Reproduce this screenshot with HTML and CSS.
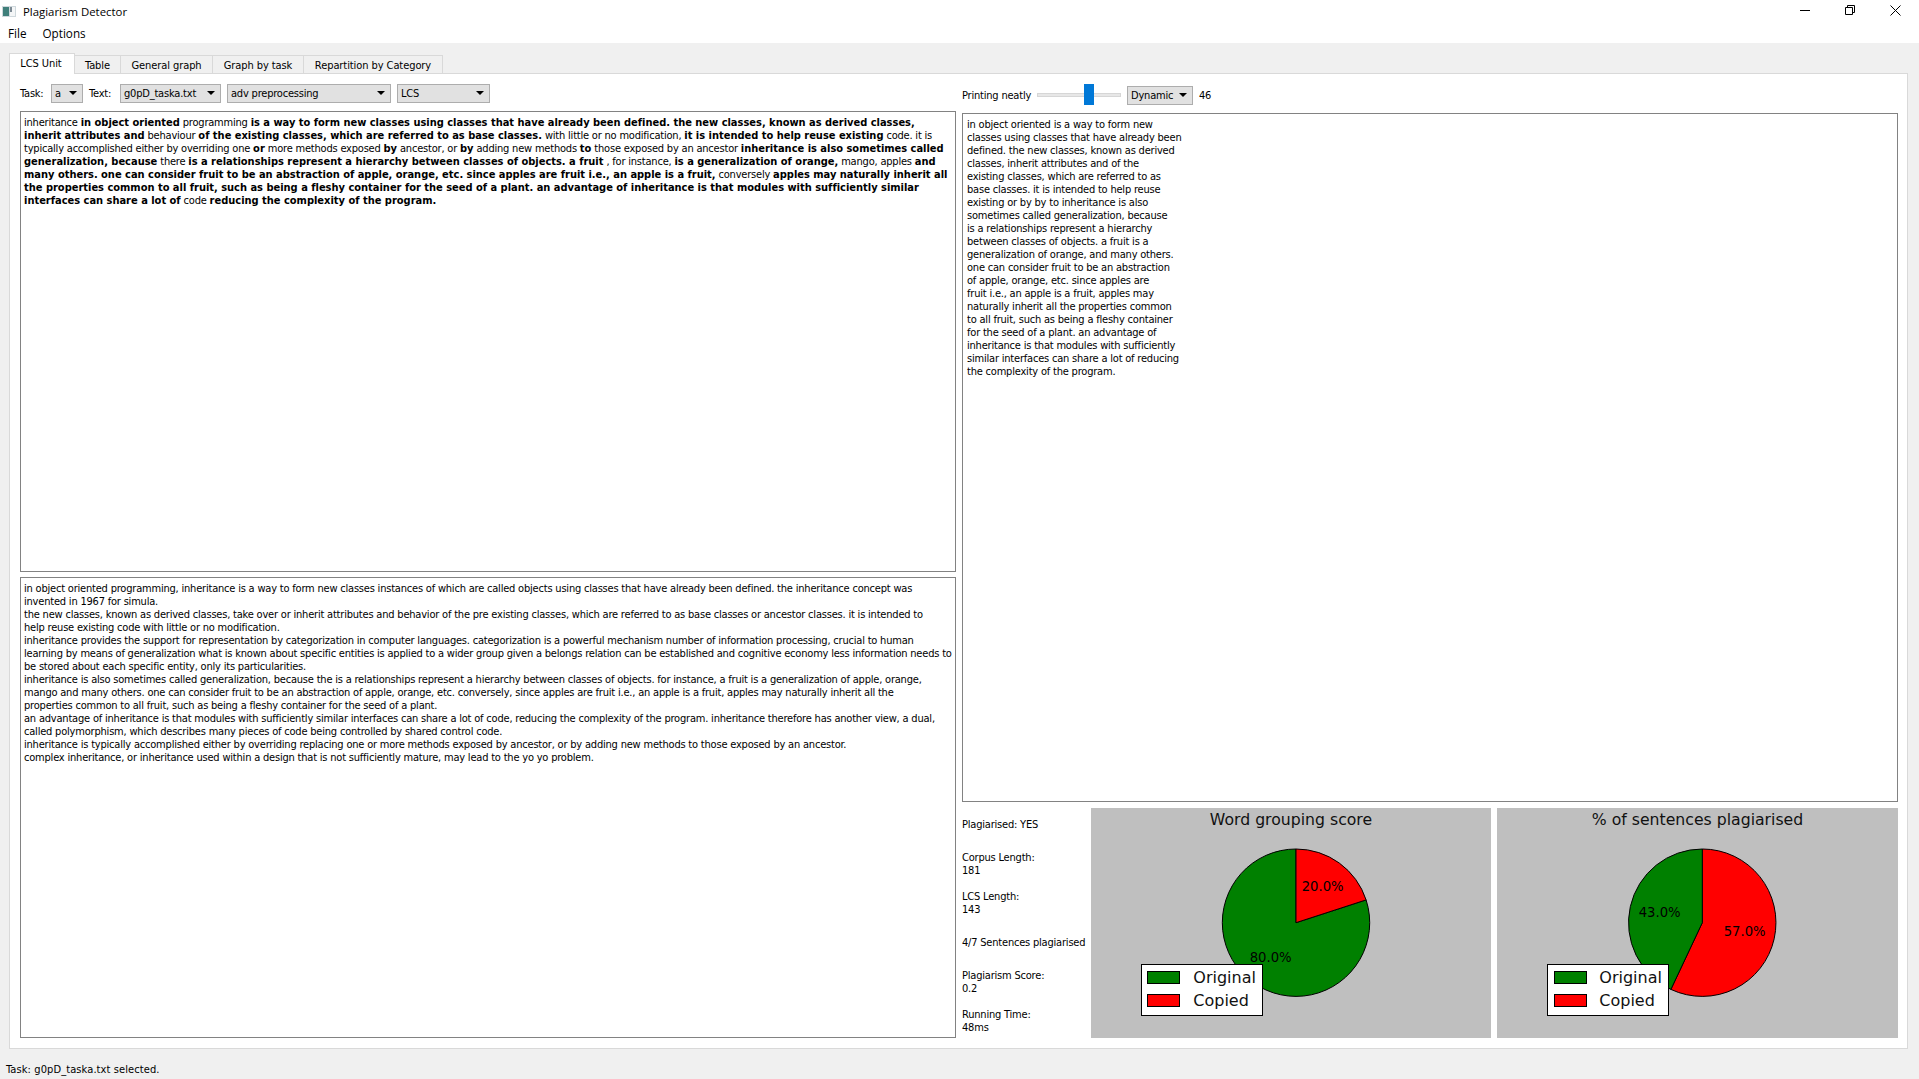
FILE: index.html
```html
<!DOCTYPE html>
<html lang="en">
<head>
  <meta charset="UTF-8" />
  <title>Plagiarism Detector</title>
  <link rel="stylesheet" href="styles.css">
</head>
<body>
  <div class="titlebar">
    <svg class="app-icon" width="14" height="11" viewBox="0 0 14 11">
      <rect x="0" y="0" width="14" height="11" fill="#cfd8dc"/>
      <rect x="1" y="1" width="6" height="9" fill="#3f7f7a"/>
      <rect x="8" y="1" width="5" height="9" fill="#f4f6f7"/>
      <rect x="8" y="1" width="2" height="5" fill="#7d8a94"/>
    </svg>
    <span class="title-text">Plagiarism Detector</span>
    <div class="window-btns">
      <svg width="10" height="10" viewBox="0 0 10 10"><path d="M0 5.5H10" stroke="#000" fill="none"/></svg>
      <svg width="10" height="10" viewBox="0 0 10 10"><path d="M.5 2.5H7.5V9.5H.5ZM2.5 2.5V.5H9.5V7.5H7.5" stroke="#000" fill="none"/></svg>
      <svg width="11" height="11" viewBox="0 0 11 11"><path d="M.5 .5L10.5 10.5M10.5 .5L.5 10.5" stroke="#000" fill="none"/></svg>
    </div>
  </div>
  <div class="menubar">
    <span>File</span>
    <span>Options</span>
  </div>

  <div class="main">
    <div class="tabs">
      <div class="tab active t1">LCS Unit</div>
      <div class="tab t2">Table</div>
      <div class="tab t3">General graph</div>
      <div class="tab t4">Graph by task</div>
      <div class="tab t5">Repartition by Category</div>
    </div>
    <div class="panel">
      <div class="col">
        <div class="toolbar">
          <span class="lbl lbl-task">Task:</span>
          <div class="combo w-task">a<i></i></div>
          <span class="lbl lbl-text">Text:</span>
          <div class="combo w-text">g0pD_taska.txt<i></i></div>
          <div class="combo w-prep">adv preprocessing<i></i></div>
          <div class="combo w-algo">LCS<i></i></div>
        </div>
        <div class="box box-top">
          <div class="t">inheritance <b>in object oriented</b> programming <b>is a way to form new classes using classes that have already been defined. the new classes, known as derived classes,</b></div>
          <div class="t"><b>inherit attributes and</b> behaviour <b>of the existing classes, which are referred to as base classes.</b> with little or no modification, <b>it is intended to help reuse existing</b> code. it is</div>
          <div class="t">typically accomplished either by overriding one <b>or</b> more methods exposed <b>by</b> ancestor, or <b>by</b> adding new methods <b>to</b> those exposed by an ancestor <b>inheritance is also sometimes called</b></div>
          <div class="t"><b>generalization, because</b> there <b>is a relationships represent a hierarchy between classes of objects. a fruit</b> , for instance, <b>is a generalization of orange,</b> mango, apples <b>and</b></div>
          <div class="t"><b>many others. one can consider fruit to be an abstraction of apple, orange, etc. since apples are fruit i.e., an apple is a fruit,</b> conversely <b>apples may naturally inherit all</b></div>
          <div class="t"><b>the properties common to all fruit, such as being a fleshy container for the seed of a plant. an advantage of inheritance is that modules with sufficiently similar</b></div>
          <div class="t"><b>interfaces can share a lot of</b> code <b>reducing the complexity of the program.</b></div>
        </div>
        <div class="box box-bottom">
<span class="t">in object oriented programming, inheritance is a way to form new classes instances of which are called objects using classes that have already been defined. the inheritance concept was
invented in 1967 for simula.
the new classes, known as derived classes, take over or inherit attributes and behavior of the pre existing classes, which are referred to as base classes or ancestor classes. it is intended to
help reuse existing code with little or no modification.
inheritance provides the support for representation by categorization in computer languages. categorization is a powerful mechanism number of information processing, crucial to human
learning by means of generalization what is known about specific entities is applied to a wider group given a belongs relation can be established and cognitive economy less information needs to
be stored about each specific entity, only its particularities.
inheritance is also sometimes called generalization, because the is a relationships represent a hierarchy between classes of objects. for instance, a fruit is a generalization of apple, orange,
mango and many others. one can consider fruit to be an abstraction of apple, orange, etc. conversely, since apples are fruit i.e., an apple is a fruit, apples may naturally inherit all the
properties common to all fruit, such as being a fleshy container for the seed of a plant.
an advantage of inheritance is that modules with sufficiently similar interfaces can share a lot of code, reducing the complexity of the program. inheritance therefore has another view, a dual,
called polymorphism, which describes many pieces of code being controlled by shared control code.
inheritance is typically accomplished either by overriding replacing one or more methods exposed by ancestor, or by adding new methods to those exposed by an ancestor.
complex inheritance, or inheritance used within a design that is not sufficiently mature, may lead to the yo yo problem.</span>
        </div>
      </div>

      <div class="col">
        <div class="toolbar toolbar-right">
          <span class="lbl lbl-print">Printing neatly</span>
          <div class="slider"><div class="handle"></div></div>
          <div class="combo w-dyn">Dynamic<i></i></div>
          <span class="lbl">46</span>
        </div>
        <div class="box box-print">
<span class="t">in object oriented is a way to form new
classes using classes that have already been
defined. the new classes, known as derived
classes, inherit attributes and of the
existing classes, which are referred to as
base classes. it is intended to help reuse
existing or by by to inheritance is also
sometimes called generalization, because
is a relationships represent a hierarchy
between classes of objects. a fruit is a
generalization of orange, and many others.
one can consider fruit to be an abstraction
of apple, orange, etc. since apples are
fruit i.e., an apple is a fruit, apples may
naturally inherit all the properties common
to all fruit, such as being a fleshy container
for the seed of a plant. an advantage of
inheritance is that modules with sufficiently
similar interfaces can share a lot of reducing
the complexity of the program.</span>
        </div>
        <div class="results">
          <div class="stats">
            <div>Plagiarised: YES</div>
            <div>Corpus Length:<br>181</div>
            <div>LCS Length:<br>143</div>
            <div>4/7 Sentences plagiarised</div>
            <div>Plagiarism Score:<br>0.2</div>
            <div>Running Time:<br>48ms</div>
          </div>

          <svg class="chart c1" viewBox="0 0 400 230">
            <text class="chart-title" x="200" y="17">Word grouping score</text>
            <path d="M205 114.7L205 41A73.7 73.7 0 1 0 275.1 91.9Z" fill="#008000" stroke="#000"/>
            <path d="M205 114.7L205 41A73.7 73.7 0 0 1 275.1 91.9Z" fill="#f00" stroke="#000"/>
            <text class="pct" x="231.7" y="83">20.0%</text>
            <text class="pct" x="179.7" y="154">80.0%</text>
            <rect x="50.5" y="156.5" width="121" height="51" fill="#fff" stroke="#000"/>
            <rect x="56.5" y="163.5" width="32" height="12" fill="#008000" stroke="#000"/>
            <rect x="56.5" y="186.5" width="32" height="12" fill="#f00" stroke="#000"/>
            <text class="legend" x="102.3" y="175">Original</text>
            <text class="legend" x="102.3" y="198">Copied</text>
          </svg>

          <svg class="chart c2" viewBox="0 0 401 230">
            <text class="chart-title" x="200.5" y="17">% of sentences plagiarised</text>
            <path d="M205.3 114.7L205.3 41A73.7 73.7 0 1 1 173.9 181.4Z" fill="#f00" stroke="#000"/>
            <path d="M205.3 114.7L205.3 41A73.7 73.7 0 0 0 173.9 181.4Z" fill="#008000" stroke="#000"/>
            <text class="pct" x="162.7" y="109">43.0%</text>
            <text class="pct" x="247.7" y="128">57.0%</text>
            <rect x="50.5" y="156.5" width="121" height="51" fill="#fff" stroke="#000"/>
            <rect x="57.5" y="163.5" width="32" height="12" fill="#008000" stroke="#000"/>
            <rect x="57.5" y="186.5" width="32" height="12" fill="#f00" stroke="#000"/>
            <text class="legend" x="102.3" y="175">Original</text>
            <text class="legend" x="102.3" y="198">Copied</text>
          </svg>
        </div>
      </div>
    </div>
  </div>

  <div class="statusbar">Task: g0pD_taska.txt selected.</div>
</body>
</html>
```

FILE: styles.css
```css
* {
  box-sizing: border-box;
}
html, body {
  margin: 0;
  height: 1079px;
  overflow: hidden;
}
body {
  font-family: "DejaVu Sans Condensed", "DejaVu Sans", Arial, sans-serif;
  font-stretch: condensed;
  font-size: 11px;
  letter-spacing: -0.2px;
  color: #000;
  background: #f0f0f0;
  display: flex;
  flex-direction: column;
}
.titlebar {
  height: 24px;
  background: #fff;
  display: flex;
  align-items: center;
  padding: 0 0 2px 2px;
  flex: none;
  font-family: "Open Sans", sans-serif;
  font-stretch: normal;
  font-size: 11.4px;
  letter-spacing: 0;
}
.app-icon {
  margin-right: 7px;
}
.window-btns {
  margin-left: auto;
  display: flex;
  align-items: center;
  gap: 35px;
  padding-right: 18px;
  margin-top: -2px;
}
.menubar {
  height: 19px;
  background: #fff;
  display: flex;
  gap: 16px;
  padding-left: 8px;
  flex: none;
  font-family: "Open Sans", sans-serif;
  font-stretch: normal;
  font-size: 11.7px;
  letter-spacing: 0;
  line-height: 18px;
}
.main {
  flex: none;
  padding: 10px 11px 0 9px;
}
.tabs {
  display: flex;
  height: 20px;
  align-items: flex-end;
}
.tab {
  height: 18px;
  background: #f0f0f0;
  border: 1px solid #d9d9d9;
  border-bottom: none;
  border-left: none;
  text-align: center;
  line-height: 19px;
  letter-spacing: -0.08px;
}
.tab.active {
  height: 21px;
  background: #fff;
  border-left: 1px solid #d9d9d9;
  margin-bottom: -1px;
  padding-right: 2px;
  position: relative;
  line-height: 20px;
}
.t1 { width: 66px; }
.t2 { width: 46px; }
.t3 { width: 92px; }
.t4 { width: 91px; }
.t5 { width: 139px; }

.panel {
  height: 976px;
  background: #fff;
  border: 1px solid #d9d9d9;
  padding: 10px 9px 10px 10px;
  display: grid;
  grid-template-columns: 936px 936px;
  column-gap: 6px;
}
.col {
  display: flex;
  flex-direction: column;
  min-width: 0;
}
.toolbar {
  display: flex;
  align-items: center;
  height: 19px;
  margin-bottom: 8px;
}
.toolbar-right {
  height: 21px;
  margin-bottom: 8px;
  padding-top: 1px;
}
.lbl {
  white-space: nowrap;
}
.lbl-task { width: 31px; }
.lbl-text { width: 31px; margin-left: 6px; }
.lbl-print { width: 75px; }
.combo {
  height: 19px;
  background: #e1e1e1;
  border: 1px solid #adadad;
  padding-left: 3px;
  line-height: 18px;
  margin-right: 6px;
  position: relative;
}
.combo i {
  position: absolute;
  right: 5px;
  top: 6px;
  width: 0;
  height: 0;
  border-left: 4px solid transparent;
  border-right: 4px solid transparent;
  border-top: 4px solid #000;
}
.w-task { width: 32px; margin-right: 0; }
.w-text { width: 101px; }
.w-prep { width: 164px; }
.w-algo { width: 93px; }
.w-dyn { width: 66px; }
.slider {
  width: 84px;
  height: 4px;
  margin-right: 6px;
  background: #e7e7e7;
  border: 1px solid #d6d6d6;
  position: relative;
}
.handle {
  position: absolute;
  left: 46px;
  top: -10px;
  width: 10px;
  height: 21px;
  background: #0078d7;
}
.box {
  border: 1px solid #828282;
  background: #fff;
  padding: 4px 3px;
  line-height: 13px;
  overflow: hidden;
}
.t {
  white-space: pre;
  display: block;
}
.box b {
  letter-spacing: -0.01px;
}
.box-top {
  height: 461px;
  margin-bottom: 5px;
}
.box-bottom {
  height: 461px;
}
.box-print {
  height: 689px;
  margin-bottom: 6px;
  padding-left: 4px;
}
.results {
  height: 230px;
  display: flex;
}
.stats {
  width: 129px;
  height: 236px;
  margin-top: -3px;
  display: grid;
  grid-template-rows: repeat(6, 1fr);
  align-items: center;
  line-height: 13px;
  white-space: nowrap;
}
.chart {
  display: block;
  height: 230px;
  background: #bfbfbf;
  font-family: "DejaVu Sans", sans-serif;
  font-stretch: normal;
  letter-spacing: 0;
}
.c1 {
  width: 400px;
  margin-right: 6px;
}
.c2 {
  width: 401px;
}
.chart-title {
  font-size: 15.7px;
  text-anchor: middle;
  fill: #111;
}
.pct {
  font-size: 13.2px;
  text-anchor: middle;
}
.legend {
  font-size: 16px;
  fill: #111;
}
.statusbar {
  padding: 14px 0 0 6px;
  letter-spacing: 0.1px;
}
```
